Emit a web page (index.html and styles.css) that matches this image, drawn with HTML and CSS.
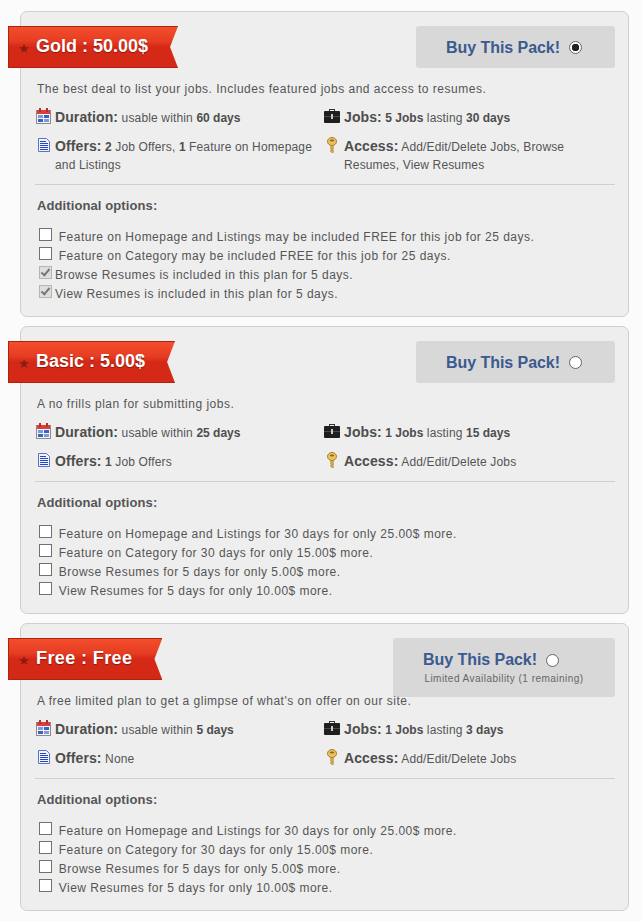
FILE: index.html
```html
<!DOCTYPE html>
<html lang="en">
<head>
  <meta charset="UTF-8" />
  <title>Job Packs</title>
  <link rel="stylesheet" href="styles.css">
</head>
<body>

<svg class="sprites" width="0" height="0">
  <symbol id="i-cal" viewBox="0 0 16 16">
    <rect x="0.5" y="2.5" width="14" height="13" fill="#f4f4f8" stroke="#8a8a90"/>
    <rect x="1" y="2" width="13" height="4" fill="#d8413a"/>
    <rect x="3" y="0" width="2" height="4" fill="#b5302b"/>
    <rect x="10" y="0" width="2" height="4" fill="#b5302b"/>
    <rect x="2" y="7" width="5" height="3" fill="#7d9bd8"/>
    <rect x="8" y="7" width="5" height="3" fill="#3f62c0"/>
    <rect x="2" y="11" width="5" height="3" fill="#3f62c0"/>
    <rect x="8" y="11" width="5" height="3" fill="#7d9bd8"/>
  </symbol>
  <symbol id="i-doc" viewBox="0 0 16 16">
    <path d="M2.500 1.500H10.500L13.500 4.500V14.500H2.500Z" fill="#f2f4fb" stroke="#5a74c4"/>
    <path d="M4 4.500H10M4 6.500H12M4 8.500H12M4 10.500H12M4 12.500H12" stroke="#2346c4"/>
  </symbol>
  <symbol id="i-case" viewBox="0 0 16 16">
    <path d="M5 3V1H11V3H10V2H6V3Z" fill="#333"/>
    <rect x="0" y="3" width="16" height="12" rx="1" fill="#1e1e1e"/>
    <rect x="0" y="8" width="16" height="1" fill="#4a4a4a"/>
    <rect x="7" y="6" width="2" height="5" fill="#c8c8c8"/>
  </symbol>
  <symbol id="i-key" viewBox="0 0 16 16">
    <ellipse cx="8" cy="4.500" rx="4.500" ry="4" fill="#ecc260" stroke="#a67c2a"/>
    <ellipse cx="8" cy="3.500" rx="2.200" ry="0.900" fill="#8a6a26"/>
    <path d="M6.800 8.500H9.200V15.500H7.800L6.800 14.500V13H7.600V12H6.800Z" fill="#e0b450" stroke="#a67c2a" stroke-width="0.700"/>
  </symbol>
</svg>

<!-- Gold -->
<section class="pack">
  <div class="pack-head">
    <h2 class="ribbon"><span class="star">★</span>Gold : 50.00$</h2>
    <label class="buy"><span class="buy-line">Buy This Pack! <input type="radio" name="pack" checked></span></label>
  </div>
  <p class="desc">The best deal to list your jobs. Includes featured jobs and access to resumes.</p>
  <div class="facts">
    <div class="fact"><svg class="ico"><use href="#i-cal"/></svg><div><b class="key">Duration:</b> usable within <b>60 days</b></div></div>
    <div class="fact fact-r"><svg class="ico"><use href="#i-case"/></svg><div><b class="key">Jobs:</b> <b>5 Jobs</b> lasting <b>30 days</b></div></div>
    <div class="fact"><svg class="ico"><use href="#i-doc"/></svg><div><b class="key">Offers:</b> <b>2</b> Job Offers, <b>1</b> Feature on Homepage and Listings</div></div>
    <div class="fact fact-r"><svg class="ico"><use href="#i-key"/></svg><div><b class="key">Access:</b> Add/Edit/Delete Jobs, Browse Resumes, View Resumes</div></div>
  </div>
  <h3 class="opts-title">Additional options:</h3>
  <ul class="opts">
    <li><input type="checkbox"> Feature on Homepage and Listings may be included FREE for this job for 25 days.</li>
    <li><input type="checkbox"> Feature on Category may be included FREE for this job for 25 days.</li>
    <li class="incl"><input type="checkbox" checked disabled>Browse Resumes is included in this plan for 5 days.</li>
    <li class="incl"><input type="checkbox" checked disabled>View Resumes is included in this plan for 5 days.</li>
  </ul>
</section>

<!-- Basic -->
<section class="pack">
  <div class="pack-head">
    <h2 class="ribbon"><span class="star">★</span>Basic : 5.00$</h2>
    <label class="buy"><span class="buy-line">Buy This Pack! <input type="radio" name="pack"></span></label>
  </div>
  <p class="desc">A no frills plan for submitting jobs.</p>
  <div class="facts">
    <div class="fact"><svg class="ico"><use href="#i-cal"/></svg><div><b class="key">Duration:</b> usable within <b>25 days</b></div></div>
    <div class="fact fact-r"><svg class="ico"><use href="#i-case"/></svg><div><b class="key">Jobs:</b> <b>1 Jobs</b> lasting <b>15 days</b></div></div>
    <div class="fact"><svg class="ico"><use href="#i-doc"/></svg><div><b class="key">Offers:</b> <b>1</b> Job Offers</div></div>
    <div class="fact fact-r"><svg class="ico"><use href="#i-key"/></svg><div><b class="key">Access:</b> Add/Edit/Delete Jobs</div></div>
  </div>
  <h3 class="opts-title">Additional options:</h3>
  <ul class="opts">
    <li><input type="checkbox"> Feature on Homepage and Listings for 30 days for only 25.00$ more.</li>
    <li><input type="checkbox"> Feature on Category for 30 days for only 15.00$ more.</li>
    <li><input type="checkbox"> Browse Resumes for 5 days for only 5.00$ more.</li>
    <li><input type="checkbox"> View Resumes for 5 days for only 10.00$ more.</li>
  </ul>
</section>

<!-- Free -->
<section class="pack">
  <div class="pack-head">
    <h2 class="ribbon ribbon-free"><span class="star">★</span>Free : Free</h2>
    <label class="buy buy-limited">
      <span class="buy-line">Buy This Pack! <input type="radio" name="pack"></span>
      <small class="limit">Limited Availability (1 remaining)</small>
    </label>
  </div>
  <p class="desc">A free limited plan to get a glimpse of what's on offer on our site.</p>
  <div class="facts">
    <div class="fact"><svg class="ico"><use href="#i-cal"/></svg><div><b class="key">Duration:</b> usable within <b>5 days</b></div></div>
    <div class="fact fact-r"><svg class="ico"><use href="#i-case"/></svg><div><b class="key">Jobs:</b> <b>1 Jobs</b> lasting <b>3 days</b></div></div>
    <div class="fact"><svg class="ico"><use href="#i-doc"/></svg><div><b class="key">Offers:</b> None</div></div>
    <div class="fact fact-r"><svg class="ico"><use href="#i-key"/></svg><div><b class="key">Access:</b> Add/Edit/Delete Jobs</div></div>
  </div>
  <h3 class="opts-title">Additional options:</h3>
  <ul class="opts">
    <li><input type="checkbox"> Feature on Homepage and Listings for 30 days for only 25.00$ more.</li>
    <li><input type="checkbox"> Feature on Category for 30 days for only 15.00$ more.</li>
    <li><input type="checkbox"> Browse Resumes for 5 days for only 5.00$ more.</li>
    <li><input type="checkbox"> View Resumes for 5 days for only 10.00$ more.</li>
  </ul>
</section>

</body>
</html>
```

FILE: styles.css
```css
body {
  margin: 0;
  padding: 11px 14px 0 20px;
  background: #fbfbfb;
  font-family: "Liberation Sans", Arial, sans-serif;
  font-size: 12px;
  letter-spacing: 0.47px;
  color: #555;
}
.sprites {
  position: absolute;
}
.pack {
  border: 1px solid #cfcfcf;
  border-radius: 7px;
  background: #eeeeee;
  padding: 14px 13px 12px 16px;
  margin-bottom: 9px;
}
.pack-head {
  display: flex;
  justify-content: space-between;
  align-items: flex-start;
  height: 42px;
}
.ribbon {
  box-sizing: border-box;
  height: 42px;
  margin: 0 0 0 -29px;
  padding: 0 30px 2px 9px;
  display: flex;
  align-items: center;
  background: linear-gradient(#f24e2c 0%, #e63d23 35%, #d42917 50%, #d42917 100%);
  border: 1px solid #b3200f;
  border-right: 0;
  clip-path: polygon(0 0, 100% 0, calc(100% - 8px) 50%, 100% 100%, 0 100%);
  color: #fff;
  font-size: 18px;
  font-weight: bold;
  letter-spacing: 0;
  line-height: 1;
  text-shadow: 0 1px 1px #8c1a0c;
}
.ribbon-free {
  letter-spacing: 0.4px;
}
.star {
  width: 18px;
  margin-top: 5px;
  color: #8a1c12;
  font-family: "DejaVu Sans", sans-serif;
  font-size: 13px;
  letter-spacing: 0;
  text-shadow: none;
}
.buy {
  box-sizing: border-box;
  width: 199px;
  height: 42px;
  padding: 1px 3px 0 0;
  display: flex;
  flex-direction: column;
  align-items: center;
  justify-content: center;
  background: #d8d8d8;
  border-radius: 3px;
}
.buy-limited {
  width: 222px;
  height: 59px;
  margin-bottom: -17px;
  padding: 13px 0 0;
  justify-content: flex-start;
}
.buy-limited .buy-line {
  margin-right: 26px;
}
.buy-line {
  display: flex;
  align-items: center;
  gap: 9px;
  color: #3b5a8f;
  font-size: 16px;
  font-weight: bold;
  letter-spacing: -0.05px;
}
.limit {
  margin-top: 4px;
  font-size: 10px;
  color: #666;
}
input[type="radio"] {
  appearance: none;
  box-sizing: border-box;
  width: 13px;
  height: 13px;
  margin: 0;
  flex: none;
  border: 1px solid #666;
  border-radius: 50%;
  background: #fff;
}
input[type="radio"]:checked {
  background: radial-gradient(circle, #222 0 3.5px, #fff 4px);
}
.desc {
  margin: 14px 0 0;
  line-height: 14px;
  letter-spacing: 0.5px;
}
.facts {
  display: grid;
  grid-template-columns: 287px 1fr;
  row-gap: 10px;
  margin: 12px 0 0 -2px;
  padding: 0 0 10px 2px;
  border-bottom: 1px solid #cfcfcf;
}
.fact {
  display: flex;
  gap: 3px;
  line-height: 18px;
  letter-spacing: 0.15px;
}
.fact-r {
  gap: 4px;
}
.ico {
  flex: none;
  width: 16px;
  height: 16px;
  margin-left: -1px;
}
.fact-r .ico {
  margin-left: 0;
}
.fact b {
  color: #4d4d4d;
  letter-spacing: 0;
}
.fact .key {
  font-size: 14px;
  letter-spacing: 0.1px;
}
.opts-title {
  margin: 13px 0 0;
  font-size: 13px;
  line-height: 16px;
  letter-spacing: 0.1px;
  color: #555;
}
.opts {
  list-style: none;
  margin: 14px 0 0;
  padding: 0;
}
.opts li {
  display: flex;
  align-items: flex-start;
  line-height: 19px;
  white-space: pre-wrap;
}
input[type="checkbox"] {
  appearance: none;
  box-sizing: border-box;
  position: relative;
  width: 13px;
  height: 13px;
  margin: 0 3px 0 2px;
  flex: none;
  border: 1px solid #707070;
  background: #fff;
}
.incl input[type="checkbox"] {
  border-color: #b5b5b5;
  background: #dedede;
}
input[type="checkbox"]:checked::before {
  content: "";
  position: absolute;
  left: 3px;
  top: 0;
  width: 3px;
  height: 7px;
  border: solid #777;
  border-width: 0 2px 2px 0;
  transform: rotate(40deg);
}
```
